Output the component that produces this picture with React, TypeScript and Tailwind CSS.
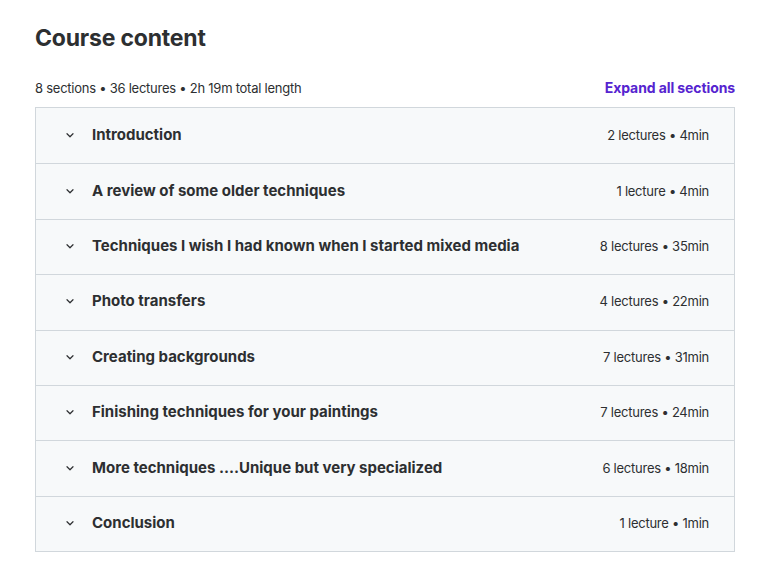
import React from 'react'

type Section = { title: string; meta: string }

const sections: Section[] = [
  { title: 'Introduction', meta: '2 lectures • 4min' },
  { title: 'A review of some older techniques', meta: '1 lecture • 4min' },
  { title: 'Techniques I wish I had known when I started mixed media', meta: '8 lectures • 35min' },
  { title: 'Photo transfers', meta: '4 lectures • 22min' },
  { title: 'Creating backgrounds', meta: '7 lectures • 31min' },
  { title: 'Finishing techniques for your paintings', meta: '7 lectures • 24min' },
  { title: 'More techniques ....Unique but very specialized', meta: '6 lectures • 18min' },
  { title: 'Conclusion', meta: '1 lecture • 1min' },
]

const Chevron = () => (
  <svg width="12" height="12" viewBox="0 0 24 24" fill="none" stroke="#2d2f31" strokeWidth="2.4" strokeLinecap="round" strokeLinejoin="round">
    <path d="M6 9.5l6 6 6-6" />
  </svg>
)

export default function App() {
  return (
    <div className="min-h-[570px] bg-white text-[#2d2f31]" style={{ fontFamily: 'Inter, "Noto Sans", sans-serif' }}>
      <div className="ml-[35px] w-[700px] pt-[22px]">
        <h2 className="text-[23px] leading-[32px] font-bold tracking-[-0.2px]">Course content</h2>

        <div className="mt-[25px] flex items-end justify-between pb-[10px]">
          <span className="text-[13px] leading-[18px] tracking-[-0.25px] text-[#2d2f31]">8 sections • 36 lectures • 2h 19m total length</span>
          <button className="text-[14px] leading-[18px] font-bold tracking-[-0.1px] text-[#5624d0]">Expand all sections</button>
        </div>

        {/* accordion of collapsed sections */}
        <div className="border border-[#d1d7dc]">
          {sections.map((s, i) => (
            <div
              key={s.title}
              className={`flex h-[55.4px] items-center bg-[#f7f9fa] pb-[2px] pl-[28px] pr-[25px] ${i > 0 ? 'border-t border-[#d1d7dc]' : ''}`}
            >
              <span className="flex w-[28px] items-center">
                <Chevron />
              </span>
              <span className="flex-1 text-[15px] font-bold leading-[20px]">{s.title}</span>
              <span className="text-[13px] leading-[18px] tracking-[-0.25px] text-[#2d2f31]">{s.meta}</span>
            </div>
          ))}
        </div>
      </div>
    </div>
  )
}
